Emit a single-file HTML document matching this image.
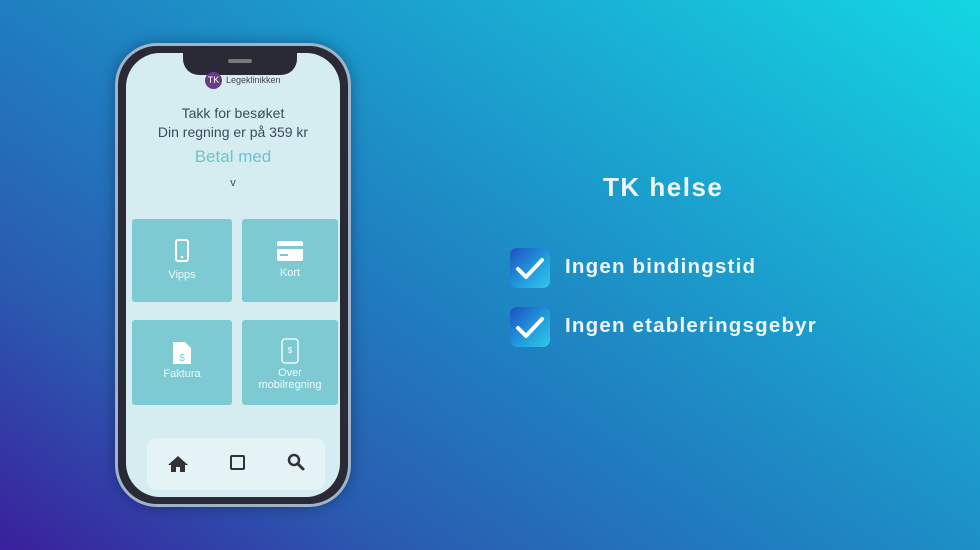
<!DOCTYPE html>
<html><head><meta charset="utf-8"><style>
*{margin:0;padding:0;box-sizing:border-box}
body{width:980px;height:550px;overflow:hidden;position:relative;font-family:"Liberation Sans",sans-serif;
background:linear-gradient(215deg,#14d6e2 0%,#1aa6d0 30%,#1f7fc0 55%,#2a5ab0 78%,#3a1f9c 100%);}
.phone{position:absolute;left:115px;top:43px;width:236px;height:464px;border-radius:42px;background:#2a2a36;border:3px solid #9fb4c8;box-shadow:0 0 14px rgba(0,0,40,.35)}
.screen{position:absolute;left:8px;top:7px;right:8px;bottom:7px;border-radius:34px;background:#d5edf0;overflow:hidden}
.notch{position:absolute;left:57px;top:-2px;width:114px;height:24px;background:#2a2a36;border-radius:0 0 16px 16px}
.notch:after{content:"";position:absolute;left:45px;top:8px;width:24px;height:4px;border-radius:2px;background:#777}
.t{position:absolute;width:100%;text-align:center;color:#3c4a5a}
.tile{position:absolute;background:#7ecad2;border-radius:3px;font-size:11px;text-align:center;color:#f0fafa}
.nav{position:absolute;left:21px;top:385px;width:178px;height:52px;background:#e4f3f5;border-radius:10px}
.chk{position:absolute;left:510px;width:40px;height:40px;border-radius:7px;background:linear-gradient(135deg,#1e50c0,#22a0e0 60%,#30c8e8)}
.lbl{position:absolute;left:565px;color:#eef4f8;font-weight:bold;font-size:20.5px;letter-spacing:1.2px}
</style></head><body>
<div class="phone"><div class="screen">
<div class="notch"></div>
<div style="position:absolute;left:79px;top:19px;width:17px;height:17px;border-radius:50%;background:#6a3a8a;color:#fff;font-size:9px;line-height:17px;text-align:center">TK</div>
<div style="position:absolute;left:100px;top:22px;font-size:9px;color:#445">Legeklinikken</div>
<div class="t" style="top:52px;font-size:14px">Takk for besøket</div>
<div class="t" style="top:71px;font-size:14px">Din regning er på 359 kr</div>
<div class="t" style="top:94px;font-size:17px;color:#6cc4cc">Betal med</div>
<div class="t" style="top:124px;font-size:11px">v</div>
<div class="tile" style="left:6px;top:166px;width:100px;height:83px">
<svg width="16" height="24" viewBox="0 0 16 24" style="margin-top:20px"><rect x="2" y="1" width="12" height="21" rx="2" fill="none" stroke="#fff" stroke-width="2"/><circle cx="8" cy="18" r="1.3" fill="#fff"/></svg><div style="margin-top:3px">Vipps</div></div>
<div class="tile" style="left:116px;top:166px;width:96px;height:83px">
<svg width="26" height="20" viewBox="0 0 26 20" style="margin-top:22px"><rect x="0" y="0" width="26" height="20" rx="2" fill="#fff"/><rect x="0" y="5" width="26" height="3" fill="#7ecad2"/><rect x="3" y="13" width="8" height="2" fill="#7ecad2"/></svg><div style="margin-top:3px">Kort</div></div>
<div class="tile" style="left:6px;top:267px;width:100px;height:85px">
<svg width="18" height="22" viewBox="0 0 18 22" style="margin-top:22px"><path d="M0 0h12l6 6v16H0z" fill="#fff"/><text x="9" y="19" font-size="10" text-anchor="middle" fill="#7ecad2" font-family="Liberation Sans">$</text></svg><div style="margin-top:1px">Faktura</div></div>
<div class="tile" style="left:116px;top:267px;width:96px;height:85px">
<svg width="18" height="26" viewBox="0 0 18 26" style="margin-top:18px"><rect x="1" y="1" width="16" height="24" rx="3" fill="none" stroke="#fff" stroke-width="1.3"/><text x="9" y="15" font-size="8" text-anchor="middle" fill="#fff" font-family="Liberation Sans">$</text></svg><div>Over<br>mobilregning</div></div>
<div class="nav">
<svg width="20" height="18" viewBox="0 0 20 18" style="position:absolute;left:21px;top:17px"><path d="M10 1L0 10h3v7h5v-5h4v5h5v-7h3z" fill="#333"/></svg>
<div style="position:absolute;left:83px;top:17px;width:15px;height:15px;border:2px solid #333;border-radius:2px"></div>
<svg width="18" height="18" viewBox="0 0 18 18" style="position:absolute;left:140px;top:15px"><circle cx="7" cy="7" r="5" fill="none" stroke="#333" stroke-width="2.5"/><path d="M11 11l5 5" stroke="#333" stroke-width="3" stroke-linecap="round"/></svg>
</div>
</div></div>
<div style="position:absolute;left:603px;top:172px;color:#eef4f8;font-weight:bold;font-size:26px;letter-spacing:1.5px">TK helse</div>
<div class="chk" style="top:248px"><svg width="40" height="40" viewBox="0 0 40 40"><path d="M8 21l8 8 16-17" fill="none" stroke="#fff" stroke-width="4" stroke-linecap="round" stroke-linejoin="round"/></svg></div>
<div class="lbl" style="top:255px">Ingen bindingstid</div>
<div class="chk" style="top:307px"><svg width="40" height="40" viewBox="0 0 40 40"><path d="M8 21l8 8 16-17" fill="none" stroke="#fff" stroke-width="4" stroke-linecap="round" stroke-linejoin="round"/></svg></div>
<div class="lbl" style="top:314px">Ingen etableringsgebyr</div>
</body></html>
